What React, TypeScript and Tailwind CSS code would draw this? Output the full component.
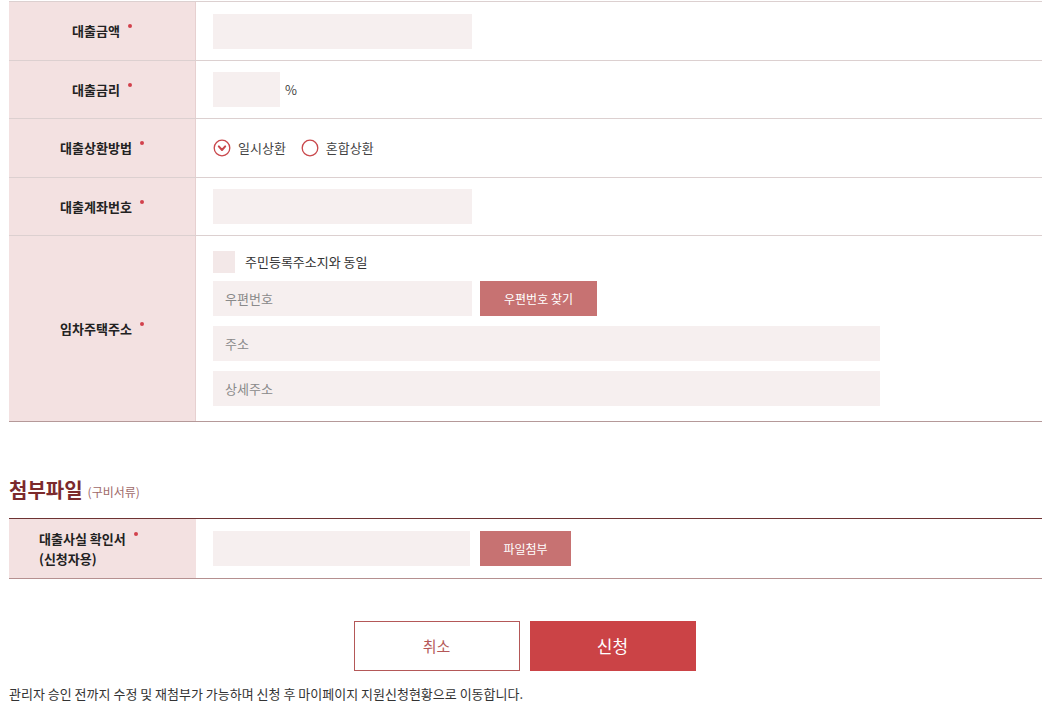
import React from "react";

const font = { fontFamily: '"Malgun Gothic", "Noto Sans CJK KR", "Noto Sans", sans-serif' };

function Dot() {
  return <span className="inline-block w-[4px] h-[4px] rounded-full bg-[#d2414c] ml-[8px] relative top-[-5px]" />;
}

function Label({ children, h }: { children: React.ReactNode; h: string }) {
  return (
    <div className={`w-[187px] shrink-0 bg-[#f3e1e1] border-r border-[#e6d0d0] flex items-center justify-center text-[13px] font-bold text-[#222] ${h}`}>
      <span className="flex items-center">{children}</span>
    </div>
  );
}

function Input({ w, placeholder }: { w: string; placeholder?: string }) {
  return (
    <div className={`${w} h-[35px] bg-[#f6efef] flex items-center px-[12px] text-[13px] text-[#8a8a8a]`}>
      {placeholder}
    </div>
  );
}

function Radio({ checked, label }: { checked?: boolean; label: string }) {
  return (
    <div className="flex items-center gap-[7px] text-[13px] text-[#444]">
      <svg width="18" height="18" viewBox="0 0 18 18">
        <circle cx="9" cy="9" r="7.8" fill="#fff" stroke="#c9474b" strokeWidth="1.3" />
        {checked && <path d="M5.8 7.4 L9 11 L12.2 7.4" fill="none" stroke="#c9474b" strokeWidth="2" strokeLinecap="round" strokeLinejoin="round" />}
      </svg>
      <span>{label}</span>
    </div>
  );
}

export default function App() {
  return (
    <div className="w-[1057px] h-[712px] bg-white overflow-hidden" style={font}>
      <div className="ml-[9px] w-[1033px] pt-[1px]">
        {/* table 1 */}
        <div className="border-t border-[#dcd0d0]">
          <div className="flex border-b border-[#dcd0d0] h-[59px]">
            <Label h="h-full">대출금액<Dot /></Label>
            <div className="flex items-center pl-[17px]">
              <Input w="w-[259px]" />
            </div>
          </div>
          <div className="flex border-b border-[#dcd0d0] h-[58px]">
            <Label h="h-full">대출금리<Dot /></Label>
            <div className="flex items-center pl-[17px] gap-[5px]">
              <Input w="w-[67px]" />
              <span className="text-[13px] text-[#444]">%</span>
            </div>
          </div>
          <div className="flex border-b border-[#dcd0d0] h-[59px]">
            <Label h="h-full">대출상환방법<Dot /></Label>
            <div className="flex items-center pl-[17px] gap-[15px]">
              <Radio checked label="일시상환" />
              <Radio label="혼합상환" />
            </div>
          </div>
          <div className="flex border-b border-[#dcd0d0] h-[58px]">
            <Label h="h-full">대출계좌번호<Dot /></Label>
            <div className="flex items-center pl-[17px]">
              <Input w="w-[259px]" />
            </div>
          </div>
          <div className="flex border-b border-[#b59999] h-[186px]">
            <Label h="h-full">임차주택주소<Dot /></Label>
            <div className="flex flex-col pl-[17px] pt-[15px]">
              <div className="flex items-center gap-[10px] h-[22px]">
                <div className="w-[22px] h-[22px] bg-[#f3e8e8]" />
                <span className="text-[13px] text-[#333]">주민등록주소지와 동일</span>
              </div>
              <div className="flex items-center gap-[8px] mt-[8px]">
                <Input w="w-[259px]" placeholder="우편번호" />
                <button className="w-[117px] h-[35px] bg-[#c77272] text-white text-[12px]">우편번호 찾기</button>
              </div>
              <div className="mt-[10px]">
                <Input w="w-[667px]" placeholder="주소" />
              </div>
              <div className="mt-[10px]">
                <Input w="w-[667px]" placeholder="상세주소" />
              </div>
            </div>
          </div>
        </div>

        {/* section heading */}
        <div className="mt-[55px] flex items-end gap-[5px] h-[26px]">
          <span className="text-[20px] font-bold text-[#7c2a2c] leading-[26px]">첨부파일</span>
          <span className="text-[12px] text-[#a06a6a] leading-[22px]">(구비서류)</span>
        </div>

        {/* table 2 */}
        <div className="mt-[15px] border-t border-[#6e3333] border-b border-b-[#b59090] flex h-[61px]">
          <div className="w-[187px] shrink-0 bg-[#f3e1e1] flex flex-col justify-center pl-[30px] text-[13px] font-bold text-[#222] leading-[20px]">
            <span className="flex items-center">대출사실 확인서<Dot /></span>
            <span>(신청자용)</span>
          </div>
          <div className="flex items-center pl-[17px] gap-[10px]">
            <Input w="w-[257px]" />
            <button className="w-[91px] h-[35px] bg-[#c77272] text-white text-[12px]">파일첨부</button>
          </div>
        </div>

        {/* buttons */}
        <div className="mt-[42px] flex justify-center gap-[10px] pr-[2px]">
          <button className="w-[166px] h-[50px] border border-[#b45858] bg-white text-[#b45858] text-[15px]">취소</button>
          <button className="w-[166px] h-[50px] bg-[#cb4346] text-white text-[17px]">신청</button>
        </div>

        <p className="mt-[13px] text-[13px] text-[#333]">관리자 승인 전까지 수정 및 재첨부가 가능하며 신청 후 마이페이지 지원신청현황으로 이동합니다.</p>
      </div>
    </div>
  );
}
